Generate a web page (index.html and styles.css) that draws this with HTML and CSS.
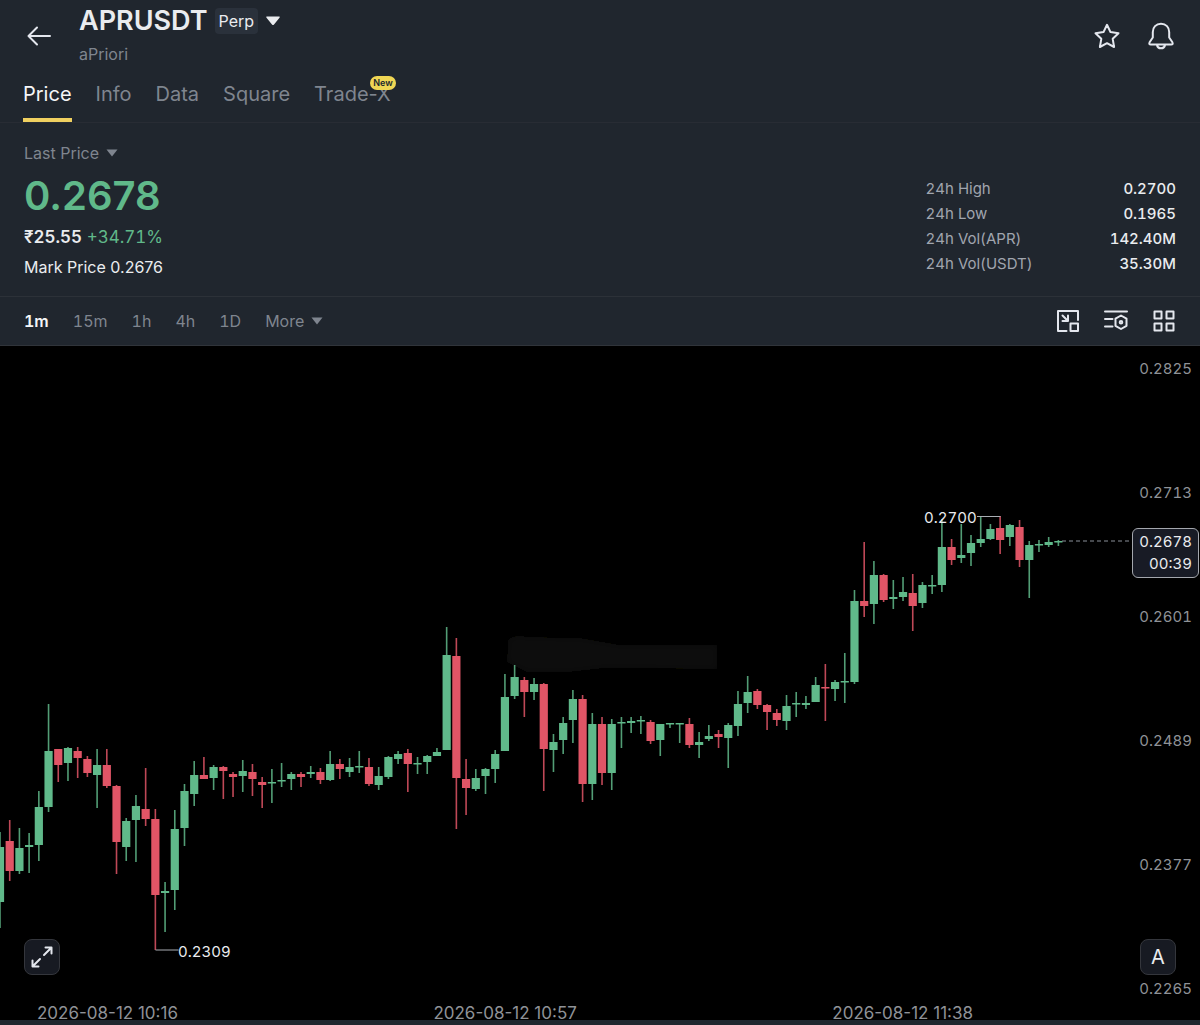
FILE: index.html
```html
<!DOCTYPE html>
<html lang="en">
<head>
<meta charset="utf-8">
<meta name="viewport" content="width=device-width, initial-scale=1">
<title>APRUSDT Perp</title>
<link rel="stylesheet" href="styles.css">
</head>
<body>
<header class="header">
  <button class="icon-btn" type="button" aria-label="Back">
    <svg width="26" height="24" viewBox="0 0 26 24" class="stroke"><path d="M24 12H2.500M11 3.500L2.500 12l8.500 8.500"/></svg>
  </button>
  <div class="pair">
    <div class="pair-top">
      <h1 class="symbol">APRUSDT</h1>
      <span class="tag">Perp</span>
      <button class="icon-btn" type="button" aria-label="Choose pair">
        <svg width="16" height="10" viewBox="0 0 16 10"><path d="M2 .5h12q1.500 0 .5 1.200L9 8.500q-1 1-2 0L1.500 1.700Q.5.5 2 .5z" fill="#eaecef"/></svg>
      </button>
    </div>
    <p class="project">aPriori</p>
  </div>
  <div class="actions">
    <button class="icon-btn" type="button" aria-label="Favourite">
      <svg width="28" height="28" viewBox="0 0 28 28" class="stroke"><path d="M14 2.800l3.500 7.300 8 1.100-5.800 5.600 1.400 8.200-7.100-3.800-7.100 3.800 1.400-8.200-5.800-5.600 8-1.100z"/></svg>
    </button>
    <button class="icon-btn" type="button" aria-label="Alerts">
      <svg width="28" height="28" viewBox="0 0 28 28" class="stroke"><path d="M14 1.800c-5 0-8.200 3.600-8.200 8.200v5.500L2.600 20.300q-1 2.200 1.200 2.200h20.400q2.200 0 1.200-2.200l-3.200-4.800V10c0-4.600-3.200-8.200-8.200-8.200zM10 23c.6 4.400 7.400 4.400 8 0"/></svg>
    </button>
  </div>
</header>
<nav class="tabs" aria-label="Sections">
  <a class="tab tab-active" href="#price">Price</a>
  <a class="tab" href="#info">Info</a>
  <a class="tab" href="#data">Data</a>
  <a class="tab" href="#square">Square</a>
  <a class="tab" href="#trade-x">Trade-X<span class="badge">New</span></a>
</nav>
<main class="main">
  <section class="overview">
    <div class="quote">
      <button class="menu-btn" type="button">Last Price
        <svg width="12" height="8" viewBox="0 0 12 8"><path d="M.5.500h11L6 7.500z" fill="currentColor"/></svg>
      </button>
      <p class="price">0.2678</p>
      <p class="change"><strong>₹25.55</strong> <span class="up">+34.71%</span></p>
      <p class="mark">Mark Price 0.2676</p>
    </div>
    <dl class="stats">
      <dt>24h High</dt><dd>0.2700</dd>
      <dt>24h Low</dt><dd>0.1965</dd>
      <dt>24h Vol(APR)</dt><dd>142.40M</dd>
      <dt>24h Vol(USDT)</dt><dd>35.30M</dd>
    </dl>
  </section>
  <div class="toolbar">
    <div class="intervals">
      <button class="menu-btn current" type="button">1m</button>
      <button class="menu-btn" type="button">15m</button>
      <button class="menu-btn" type="button">1h</button>
      <button class="menu-btn" type="button">4h</button>
      <button class="menu-btn" type="button">1D</button>
      <button class="menu-btn" type="button">More
        <svg width="12" height="8" viewBox="0 0 12 8"><path d="M.5.500h11L6 7.500z" fill="currentColor"/></svg>
      </button>
    </div>
    <div class="tools">
      <button class="icon-btn" type="button" aria-label="Floating window">
        <svg width="24" height="24" viewBox="0 0 24 24" class="stroke"><path d="M22 11V2H2v20h8.500M6.500 6.500l5 5M12 6.500V12H6.500M14.500 14.500H22V22h-7.500z"/></svg>
      </button>
      <button class="icon-btn" type="button" aria-label="Indicators">
        <svg width="24" height="24" viewBox="0 0 24 24" class="stroke"><path d="M1 2.500h22M1 10h7.500M1 17.500h7.500M17 6.500l5.500 3.200v7.100L17 20l-5.500-3.200V9.700z"/><circle cx="17" cy="13.300" r="1.300"/></svg>
      </button>
      <button class="icon-btn" type="button" aria-label="Layout">
        <svg width="24" height="24" viewBox="0 0 24 24" class="stroke"><path d="M2.500 2.500h7v7h-7zM14.500 2.500h7v7h-7zM2.500 14.500h7v7h-7zM14.500 14.500h7v7h-7z"/></svg>
      </button>
    </div>
  </div>
  <section class="chart" aria-label="Price chart">
    <svg class="plot" viewBox="0 346 1200 674">
      <defs><filter id="soft"><feGaussianBlur stdDeviation="3"/></filter></defs>
      <path d="M508 640q6-6 20-3l52 1 40 7h97v24l-112-1-36 4h-42l-20-10z" fill="#0b0b0a" filter="url(#soft)"/>
      <g id="candles"></g>
      <path d="M977 516.500h23.500M155.500 950h23" stroke="#a9adb3" fill="none"/>
      <path d="M1062 541h69" stroke="#8a9099" stroke-dasharray="4 3"/>
      <text x="924" y="523" class="note">0.2700</text>
      <text x="178" y="957" class="note">0.2309</text>
    </svg>
    <div class="axis-price">
      <span>0.2825</span><span>0.2713</span><span>0.2601</span><span>0.2489</span><span>0.2377</span><span>0.2265</span>
    </div>
    <div class="axis-time">
      <span>2026-08-12 10:16</span><span>2026-08-12 10:57</span><span>2026-08-12 11:38</span>
    </div>
    <div class="last"><span>0.2678</span><span>00:39</span></div>
    <button class="corner corner-left" type="button" aria-label="Full screen">
      <svg width="24" height="24" viewBox="0 0 24 24" class="stroke"><path d="M14 10l7.500-7.500M15.500 2.500h6v6M10 14l-7.500 7.500M2.500 15.500v6h6"/></svg>
    </button>
    <button class="corner corner-right" type="button" aria-label="Auto scale">A</button>
  </section>
</main>
<script src="chart.js"></script>
</body>
</html>
```
FILE: styles.css
```css
* { box-sizing: border-box; }
body {
  margin: 0;
  min-height: 100vh;
  background: #20262e;
  color: #eaecef;
  font-family: Inter, "Liberation Sans", sans-serif;
  font-size: 16px;
  line-height: 20px;
}
h1, p, dl, dd { margin: 0; }
button {
  padding: 0;
  border: 0;
  background: none;
  color: inherit;
  font: inherit;
  cursor: pointer;
}
svg { display: block; }
.stroke {
  fill: none;
  stroke: #e4e7ee;
  stroke-width: 2;
  stroke-linejoin: round;
  stroke-linecap: round;
}
.header {
  display: flex;
  align-items: center;
  padding: 5px 25px 0 26px;
}
.pair {
  margin-left: 27px;
  padding-bottom: 3px;
}
.pair-top {
  display: flex;
  align-items: center;
  gap: 7px;
}
.symbol {
  font-size: 27px;
  line-height: 32px;
  font-weight: 600;
}
.tag {
  padding: 3px 4px;
  border-radius: 4px;
  background: #2a313b;
}
.project {
  margin-top: 7px;
  color: #7f858f;
}
.actions {
  display: flex;
  gap: 26px;
  margin-left: auto;
}
.tabs {
  display: flex;
  gap: 24px;
  padding: 13px 23px 0;
  border-bottom: 1px solid #282c34;
}
.tab {
  position: relative;
  height: 42px;
  color: #7f858f;
  font-size: 20px;
  line-height: 28px;
  text-decoration: none;
}
.tab-active {
  border-bottom: 4px solid #f0d060;
  color: #f5f6f8;
}
.badge {
  position: absolute;
  top: -4px;
  right: -5px;
  padding: 0 3px;
  border-radius: 8px;
  background: #f0d654;
  color: #20262e;
  font-size: 9px;
  line-height: 14px;
  font-weight: 600;
}
.overview {
  display: flex;
  justify-content: space-between;
  align-items: flex-end;
  padding: 20px 24px 19px;
  border-bottom: 1px solid #2c3138;
}
.menu-btn {
  display: flex;
  align-items: center;
  gap: 7px;
  color: #7f858f;
}
.price {
  margin-top: 9px;
  color: #60b98a;
  font-size: 40px;
  line-height: 48px;
  font-weight: 600;
}
.change {
  margin-top: 7px;
  font-size: 17px;
  font-variant-numeric: tabular-nums;
}
.change strong { font-weight: 600; }
.up { color: #60b98a; }
.mark { margin-top: 10px; }
.stats {
  display: grid;
  grid-template-columns: 1fr auto;
  gap: 5px 77px;
  padding-bottom: 3px;
  font-size: 15px;
  font-variant-numeric: tabular-nums;
}
.stats dt { color: #a0a5ae; }
.stats dd {
  text-align: right;
  font-weight: 500;
}
.toolbar {
  display: flex;
  justify-content: space-between;
  align-items: center;
  padding: 12px 24px;
  border-bottom: 1px solid #30343a;
}
.intervals, .tools { display: flex; gap: 24px; }
.intervals button { font-variant-numeric: tabular-nums; }
.intervals .current { color: #f5f6f8; font-weight: 600; }
.chart {
  position: relative;
  display: grid;
  background: #000;
  color: #8f9297;
}
.plot, .axis-price, .axis-time { grid-area: 1 / 1; }
.plot { width: 100%; }
.note, .axis-price, .last {
  font-size: 15px;
  font-variant-numeric: tabular-nums;
}
.note { fill: #eaecef; }
.axis-price {
  display: flex;
  flex-direction: column;
  justify-content: space-between;
  justify-self: end;
  padding: 13px 8px 21px 0;
}
.axis-time {
  display: flex;
  justify-content: space-between;
  align-self: end;
  padding: 0 227px 0 37px;
  font-size: 17px;
  line-height: 14px;
}
.last {
  position: absolute;
  top: 27%;
  right: 1px;
  display: flex;
  flex-direction: column;
  align-items: flex-end;
  gap: 2px;
  padding: 3px 6px;
  border: 1px solid #a4a7ad;
  border-radius: 6px;
  background: #181b25;
  color: #eaecef;
}
.corner {
  position: absolute;
  bottom: 45px;
  display: grid;
  place-items: center;
  width: 36px;
  height: 36px;
  border: 1px solid #34363c;
  border-radius: 8px;
  background: #171a22;
  color: #eaecef;
  font-size: 20px;
}
.corner-left { left: 24px; }
.corner-right { right: 24px; }
```
FILE: chart.js
```js
// One candle per minute: direction, then high, body top, body bottom and low in plot units.
const candles = `
g 832 847 902 928|r 820 841 871 881|g 828 848 871 874|g 833 845 847 873|g 791 807 845 861
g 704 751 807 812|r 749 749 765 782|g 747 748 763 781|r 747 751 758 778|r 756 759 773 777
g 749 765 775 808|r 749 765 786 788|r 785 786 842 874|g 818 821 847 861|g 795 806 820 862
r 768 809 819 826|r 809 819 895 950|g 882 891 893 932|g 810 829 890 910|g 784 791 828 846
g 761 775 794 806|r 757 775 779 779|g 765 767 778 790|r 766 767 771 799|r 772 774 777 797
g 760 771 776 792|r 764 772 779 796|r 777 782 785 808|g 769 782 783 803|g 763 780 781 787
g 772 774 779 790|r 772 774 777 787|g 766 772 774 778|r 768 772 780 784|g 751 764 780 781
r 759 764 769 779|g 758 767 772 777|g 751 766 767 773|r 758 767 784 786|g 767 776 785 790
g 756 757 777 779|g 751 754 759 764|r 749 753 764 792|g 757 763 764 774|g 755 756 762 774
g 748 752 756 756|g 627 655 750 750|r 638 656 778 829|r 759 779 788 815|g 769 778 789 791
g 768 769 776 794|g 750 754 769 783|g 674 697 751 751|g 665 677 696 699|r 677 680 692 717
g 678 684 692 700|r 683 684 749 791|g 734 742 750 772|g 717 723 740 754|g 690 699 720 743
r 695 699 784 802|g 713 724 784 800|r 717 724 773 785|g 719 724 773 790|g 717 722 723 748
g 717 721 723 733|g 716 720 721 734|r 720 722 741 744|g 724 724 740 756|g 723 723 724 728
g 723 723 724 743|r 718 724 745 748|g 732 742 745 758|g 725 736 739 741|r 730 734 737 748
g 723 725 738 768|g 691 704 726 736|g 676 692 703 713|r 689 691 705 709|r 704 705 712 730
r 709 713 720 726|g 695 706 721 730|g 692 703 704 717|g 696 703 705 709|g 677 685 702 702
r 664 687 688 721|g 680 682 689 701|g 653 681 682 703|g 590 601 682 684|r 542 601 606 617
g 561 575 604 624|r 574 575 600 602|g 580 597 599 609|g 577 592 597 601|r 574 593 606 631
g 582 585 603 608|g 575 585 586 594|g 519 547 585 592|r 539 547 560 565|g 524 555 558 563
g 535 543 553 566|g 517 539 543 547|g 524 529 539 540|r 516 528 540 554|g 524 525 537 546
r 520 527 560 567|g 541 545 560 598|g 540 544 545 552|g 537 542 545 547|g 540 541 542 546`;

const step = 9.71;
const colors = { g: "#60b98a", r: "#e05566" };

document.getElementById("candles").innerHTML = candles
  .trim()
  .split(/[|\n]/)
  .map((row, i) => {
    const [dir, high, top, bottom, low] = row.split(" ");
    const x = i * step;
    return `<g fill="${colors[dir]}">
      <rect x="${x - 0.8}" y="${high}" width="1.6" height="${low - high}" opacity="0.85"/>
      <rect x="${x - 4.1}" y="${top}" width="8.2" height="${Math.max(bottom - top, 1.5)}"/></g>`;
  })
  .join("");
```
